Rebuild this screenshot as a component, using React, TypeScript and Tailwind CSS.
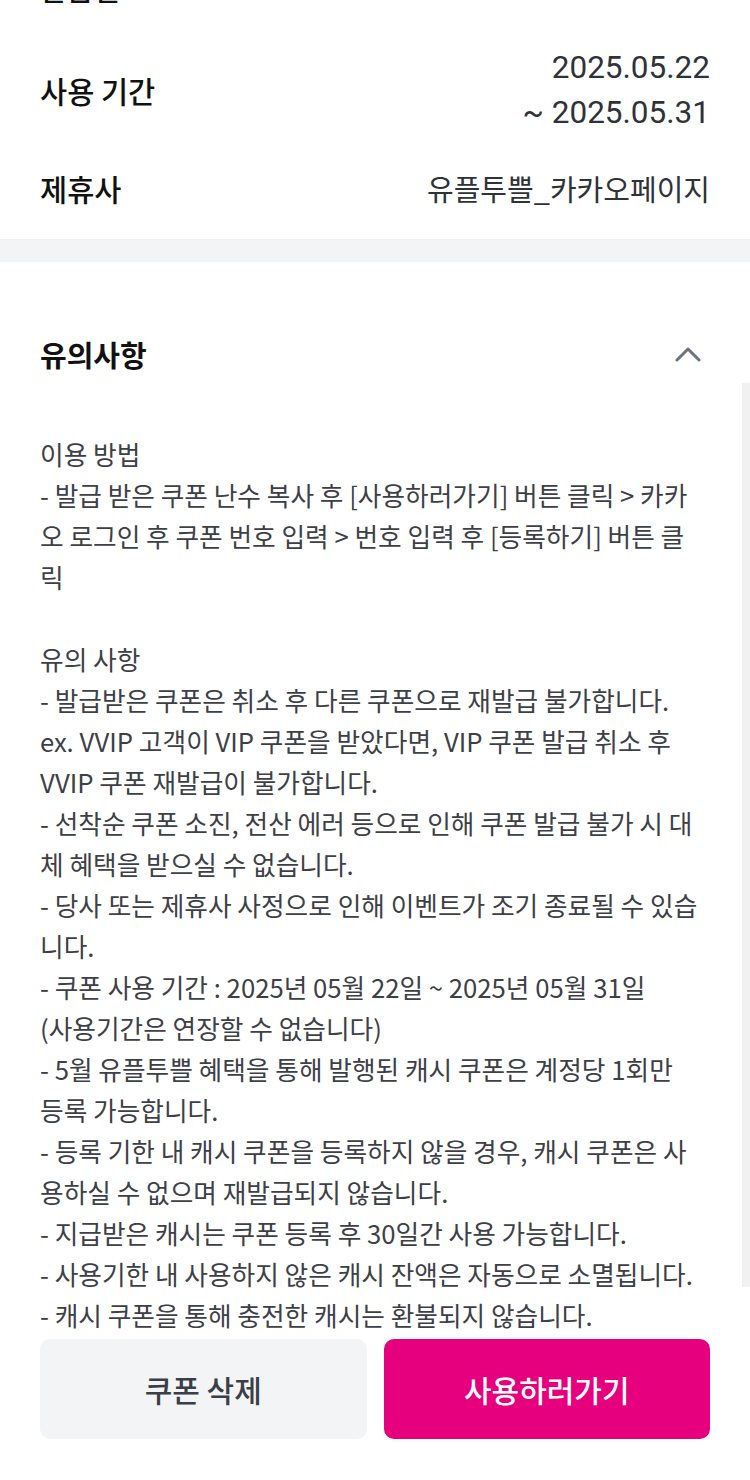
const lines = [
  '이용 방법',
  '- 발급 받은 쿠폰 난수 복사 후 [사용하러가기] 버튼 클릭 > 카카',
  '오 로그인 후 쿠폰 번호 입력 > 번호 입력 후 [등록하기] 버튼 클',
  '릭',
  '',
  '유의 사항',
  '- 발급받은 쿠폰은 취소 후 다른 쿠폰으로 재발급 불가합니다.',
  'ex. VVIP 고객이 VIP 쿠폰을 받았다면, VIP 쿠폰 발급 취소 후',
  'VVIP 쿠폰 재발급이 불가합니다.',
  '- 선착순 쿠폰 소진, 전산 에러 등으로 인해 쿠폰 발급 불가 시 대',
  '체 혜택을 받으실 수 없습니다.',
  '- 당사 또는 제휴사 사정으로 인해 이벤트가 조기 종료될 수 있습',
  '니다.',
  '- 쿠폰 사용 기간 : 2025년 05월 22일 ~ 2025년 05월 31일',
  '(사용기간은 연장할 수 없습니다)',
  '- 5월 유플투쁠 혜택을 통해 발행된 캐시 쿠폰은 계정당 1회만',
  '등록 가능합니다.',
  '- 등록 기한 내 캐시 쿠폰을 등록하지 않을 경우, 캐시 쿠폰은 사',
  '용하실 수 없으며 재발급되지 않습니다.',
  '- 지급받은 캐시는 쿠폰 등록 후 30일간 사용 가능합니다.',
  '- 사용기한 내 사용하지 않은 캐시 잔액은 자동으로 소멸됩니다.',
  '- 캐시 쿠폰을 통해 충전한 캐시는 환불되지 않습니다.',
]

export default function App() {
  return (
    <div className="relative w-[750px] h-[1480px] overflow-hidden bg-white font-['Noto_Sans_CJK_KR',sans-serif] text-[#111]">
      {/* row above, scrolled mostly out of view */}
      <div className="h-[6px] overflow-hidden px-10">
        <div className="-mt-[30px] text-[29px] leading-[36px] font-medium">발급일</div>
      </div>

      <section className="px-10 pt-[39px]">
        <div className="flex items-center justify-between">
          <span className="text-[29.5px] font-medium">사용 기간</span>
          <div className="text-right text-[31.5px] leading-[45px] text-[#2f3237] font-['Roboto','Noto_Sans_CJK_KR',sans-serif]">
            <div>2025.05.22</div>
            <div>~ 2025.05.31</div>
          </div>
        </div>
        <div className="mt-[31px] flex h-[45px] items-center justify-between">
          <span className="text-[29.5px] font-medium">제휴사</span>
          <span className="text-[29px] text-[#2f3237]">유플투쁠_카카오페이지</span>
        </div>
      </section>

      <div className="mt-[28px] h-[23px] border-t border-[#eceef0] bg-[#f3f4f6]" />

      <section className="px-10 pt-[72px]">
        <div className="flex h-[40px] items-center justify-between">
          <h2 className="text-[29px] font-bold leading-[40px]">유의사항</h2>
          <svg width="26" height="16" viewBox="0 0 26 16" className="mr-[9px]" fill="none">
            <polyline points="2,14 13,3 24,14" stroke="#6b7280" strokeWidth="3" strokeLinecap="round" strokeLinejoin="round" />
          </svg>
        </div>
        <div className="mt-[59px] text-[25.7px] leading-[41px] text-[#3d4046]">
          {lines.map((line, i) => (
            <div key={i} className="h-[41px] whitespace-nowrap">{line}</div>
          ))}
        </div>
      </section>

      {/* scroll track */}
      <div className="absolute right-0 top-[383px] h-[904px] w-[8px] bg-[#f1f1f2]" />

      <div className="mt-[4px] flex gap-[17px] px-10">
        <button className="flex h-[100px] flex-1 items-center justify-center rounded-[10px] bg-[#f3f4f6] text-[30px] font-medium text-[#3a3f47]">
          쿠폰 삭제
        </button>
        <button className="flex h-[100px] flex-1 items-center justify-center rounded-[10px] bg-[#e6007e] text-[30px] font-medium text-white">
          사용하러가기
        </button>
      </div>
    </div>
  )
}
